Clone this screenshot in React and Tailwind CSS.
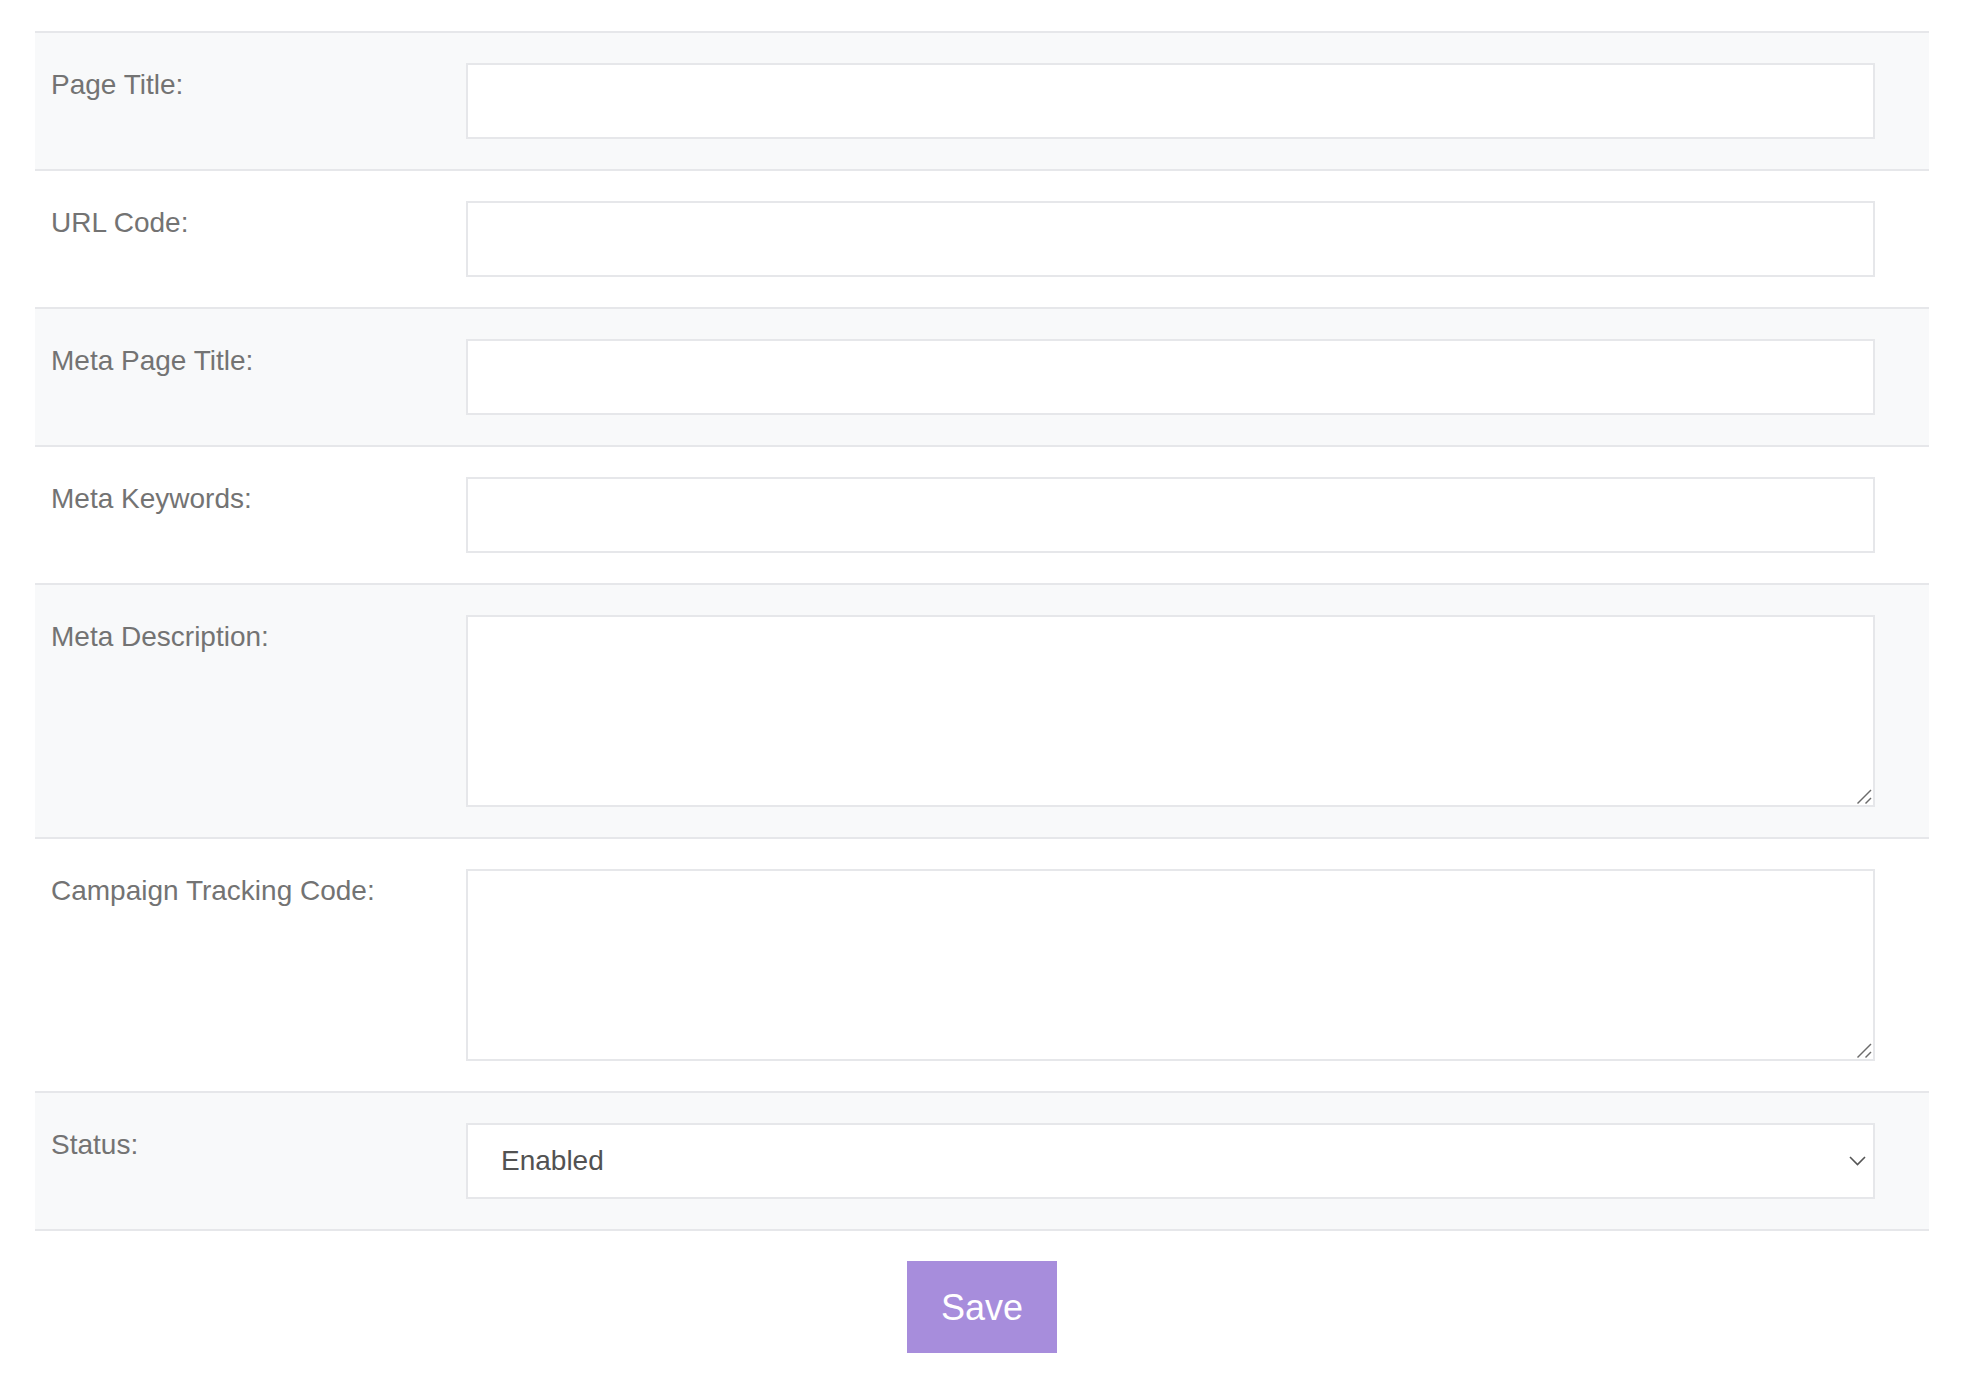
import React from "react";

const rows = [
  { label: "Page Title:", type: "input" },
  { label: "URL Code:", type: "input" },
  { label: "Meta Page Title:", type: "input" },
  { label: "Meta Keywords:", type: "input" },
  { label: "Meta Description:", type: "textarea" },
  { label: "Campaign Tracking Code:", type: "textarea" },
  { label: "Status:", type: "select" },
];

function Field({ type }) {
  if (type === "textarea") {
    return (
      <div className="relative flex flex-1">
        <textarea className="h-[192px] flex-1 resize-none border-2 border-[#e6e7ea] bg-white outline-none" />
        <svg
          className="pointer-events-none absolute bottom-[3px] right-[3px]"
          width="16"
          height="16"
          viewBox="0 0 16 16"
          fill="none"
        >
          <path d="M1.5 15.5 L15 2" stroke="#6b6b6b" strokeWidth="1.4" />
          <path d="M9.5 15.5 L15 10" stroke="#6b6b6b" strokeWidth="1.4" />
        </svg>
      </div>
    );
  }
  if (type === "select") {
    return (
      <div className="relative flex-1">
        <select
          defaultValue="1"
          className="h-[76px] w-full appearance-none border-2 border-[#e6e7ea] bg-white pl-[33px] text-[28px] text-[#525252] outline-none"
        >
          <option value="1">Enabled</option>
          <option value="0">Disabled</option>
        </select>
        <svg
          className="pointer-events-none absolute right-[9px] top-1/2 -translate-y-1/2"
          width="17"
          height="10"
          viewBox="0 0 17 10"
          fill="none"
        >
          <path d="M1 1 L8.5 8.5 L16 1" stroke="#555" strokeWidth="1.6" />
        </svg>
      </div>
    );
  }
  return (
    <input
      type="text"
      className="h-[76px] flex-1 border-2 border-[#e6e7ea] bg-white outline-none"
    />
  );
}

export default function App() {
  return (
    <div className="min-h-[1390px] bg-white px-[35px] pt-[31px] font-['Liberation_Sans',Arial,sans-serif]">
      <div className="border-t-2 border-[#e6e7ea]">
        {rows.map((r, i) => (
          <div
            key={r.label}
            className={
              "flex border-b-2 border-[#e6e7ea] py-[30px] pl-4 pr-[54px] " +
              (i % 2 === 0 ? "bg-[#f8f9fa]" : "bg-white")
            }
          >
            <label className="w-[415px] shrink-0 pt-[4px] text-[28px] leading-[36px] text-[#737373]">
              {r.label}
            </label>
            <Field type={r.type} />
          </div>
        ))}
      </div>
      <div className="flex justify-center pt-[30px]">
        <button className="h-[92px] w-[150px] bg-[#a78ddc] pt-[2px] text-[36px] text-white">
          Save
        </button>
      </div>
    </div>
  );
}
